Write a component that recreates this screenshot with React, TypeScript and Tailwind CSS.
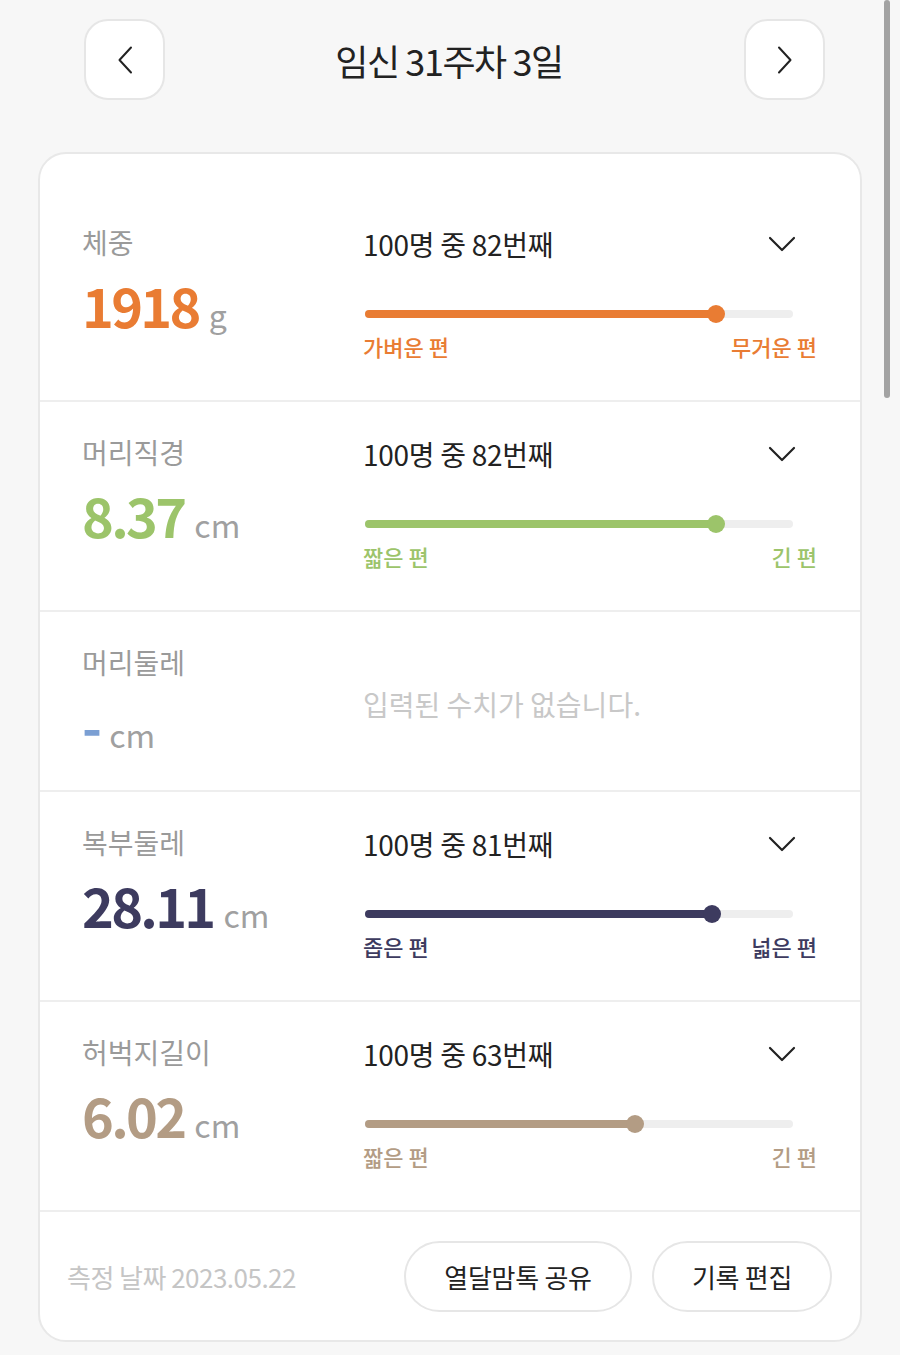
type Metric = {
  label: string;
  value: string | null;
  unit: string;
  rank?: number;
  color: string;
  low?: string;
  high?: string;
};

const metrics: Metric[] = [
  { label: "체중", value: "1918", unit: "g", rank: 82, color: "#e97c33", low: "가벼운 편", high: "무거운 편" },
  { label: "머리직경", value: "8.37", unit: "cm", rank: 82, color: "#9cc46a", low: "짧은 편", high: "긴 편" },
  { label: "머리둘레", value: null, unit: "cm", color: "#7b9fd3" },
  { label: "복부둘레", value: "28.11", unit: "cm", rank: 81, color: "#3d3b5f", low: "좁은 편", high: "넓은 편" },
  { label: "허벅지길이", value: "6.02", unit: "cm", rank: 63, color: "#b39c84", low: "짧은 편", high: "긴 편" },
];

const font = "font-['Noto_Sans_CJK_KR','Noto_Sans',sans-serif]";

function Chevron({ dir }: { dir: "left" | "right" | "down" }) {
  if (dir === "down") {
    return (
      <svg width="28" height="16" viewBox="0 0 28 16" fill="none" stroke="#222222" strokeWidth="2.2" strokeLinecap="round" strokeLinejoin="round">
        <path d="M2 2 L14 14 L26 2" />
      </svg>
    );
  }
  return (
    <svg width="16" height="28" viewBox="0 0 16 28" fill="none" stroke="#222222" strokeWidth="2" strokeLinecap="round" strokeLinejoin="round">
      <path d={dir === "left" ? "M14 1.5 L2.5 14 L14 26.5" : "M2 1.5 L13.5 14 L2 26.5"} />
    </svg>
  );
}

function MetricRow({ m }: { m: Metric }) {
  return (
    <div className={`flex border-b-2 border-[#eeeeee] pl-[42px] ${m.value ? "h-[210px]" : "h-[180px]"}`}>
      {/* left */}
      <div className="w-[281px] shrink-0 pt-[32px]">
        <div className="text-[28px] leading-[36px] text-[#9a9a9a]">{m.label}</div>
        <div className="mt-[13px] flex items-baseline leading-[64px]">
          <span className="text-[54px] font-bold tracking-[-0.05em]" style={{ color: m.color }}>
            {m.value ?? "-"}
          </span>
          <span className="ml-[10px] text-[32px] text-[#a0a0a0]">{m.unit}</span>
        </div>
      </div>

      {/* right */}
      {m.value ? (
        <div className="w-[454px] pt-[34px]">
          <div className="flex items-center justify-between pr-[21px]">
            <span className="text-[28px] leading-[36px] tracking-[-0.01em] text-[#222222]">100명 중 {m.rank}번째</span>
            <Chevron dir="down" />
          </div>
          <div className="relative ml-[2px] mt-[43px] flex h-[18px] w-[428px] items-center">
            <div className="h-[8px] w-full rounded-full bg-[#eeeeee]" />
            <div
              className="absolute left-0 top-[5px] h-[8px] rounded-full"
              style={{ width: `${m.rank}%`, backgroundColor: m.color }}
            />
            <div
              className="absolute top-0 h-[18px] w-[18px] -translate-x-1/2 rounded-full"
              style={{ left: `${m.rank}%`, backgroundColor: m.color }}
            />
          </div>
          <div
            className="mt-[8px] flex justify-between text-[22px] font-medium leading-[30px]"
            style={{ color: m.color }}
          >
            <span>{m.low}</span>
            <span>{m.high}</span>
          </div>
        </div>
      ) : (
        <div className="flex items-center pt-[6px] text-[28px] text-[#c8c8c8]">입력된 수치가 없습니다.</div>
      )}
    </div>
  );
}

export default function App() {
  return (
    <div className={`relative min-h-screen bg-[#f7f7f7] pb-[14px] ${font}`}>
      {/* header */}
      <div className="flex items-center pl-[84px] pr-[75px] pt-[19px]">
        <button className="flex h-[81px] w-[81px] items-center justify-center rounded-[24px] border-2 border-[#e6e6e6] bg-white">
          <Chevron dir="left" />
        </button>
        <h1 className="flex-1 pr-[11px] text-center text-[36px] leading-[44px] tracking-[-0.04em] text-[#222222]">
          임신 31주차 3일
        </h1>
        <button className="flex h-[81px] w-[81px] items-center justify-center rounded-[24px] border-2 border-[#e6e6e6] bg-white">
          <Chevron dir="right" />
        </button>
      </div>

      {/* card */}
      <div className="mx-[38px] mt-[52px] overflow-hidden rounded-[28px] border-2 border-[#e8e8e8] bg-white pt-[38px]">
        {metrics.map((m) => (
          <MetricRow key={m.label} m={m} />
        ))}
        <div className="flex h-[128px] items-center justify-between pl-[27px] pr-[28px]">
          <span className="text-[26px] tracking-[-0.02em] text-[#c5c5c5]">측정 날짜 2023.05.22</span>
          <div className="flex gap-[20px]">
            <button className="h-[71px] w-[228px] rounded-full border-2 border-[#e6e6e6] text-[26px] tracking-[-0.01em] text-[#222222]">
              열달맘톡 공유
            </button>
            <button className="h-[71px] w-[180px] rounded-full border-2 border-[#e6e6e6] text-[26px] tracking-[-0.01em] text-[#222222]">
              기록 편집
            </button>
          </div>
        </div>
      </div>

      {/* scrollbar overlay */}
      <div className="absolute right-[10px] top-0 h-[398px] w-[6px] rounded-full bg-[#a3a3a3]" />
    </div>
  );
}
